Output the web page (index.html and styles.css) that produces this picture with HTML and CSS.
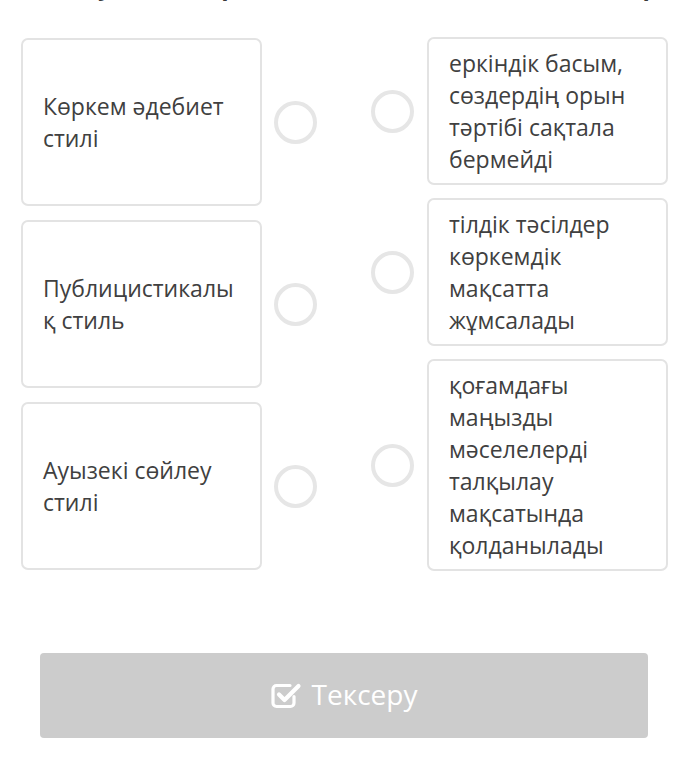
FILE: index.html
```html
<!DOCTYPE html>
<html lang="kk">
<head>
<meta charset="utf-8">
<title>Сәйкестендіру</title>
<link rel="stylesheet" href="styles.css">
</head>
<body>
<h2 class="heading">Сөйлеу стильдерін сипаттамасымен сәйкестендір</h2>
<div class="board">
  <div class="col col-left">
    <div class="item">
      <div class="card card-left">Көркем әдебиет стилі</div>
      <span class="dot"></span>
    </div>
    <div class="item">
      <div class="card card-left">Публицистикалы<wbr>қ стиль</div>
      <span class="dot"></span>
    </div>
    <div class="item">
      <div class="card card-left">Ауызекі сөйлеу стилі</div>
      <span class="dot"></span>
    </div>
  </div>
  <div class="col col-right">
    <div class="item">
      <span class="dot"></span>
      <div class="card card-right">еркіндік басым, сөздердің орын тәртібі сақтала бермейді</div>
    </div>
    <div class="item">
      <span class="dot"></span>
      <div class="card card-right">тілдік тәсілдер көркемдік мақсатта жұмсалады</div>
    </div>
    <div class="item">
      <span class="dot"></span>
      <div class="card card-right">қоғамдағы маңызды мәселелерді талқылау мақсатында қолданылады</div>
    </div>
  </div>
</div>
<button class="check-btn" type="button">
  <svg class="check-icon" width="31" height="28" viewBox="0 0 31 28" aria-hidden="true">
    <path d="M23 15.5 V22 a3.5 3.5 0 0 1 -3.5 3.5 H5.5 a3.5 3.5 0 0 1 -3.5 -3.5 V8 a3.5 3.5 0 0 1 3.5 -3.5 H19" fill="none" stroke="#fff" stroke-width="3.2" stroke-linecap="round"/>
    <path d="M8 13.5 L13.5 19 L27.5 5" fill="none" stroke="#fff" stroke-width="4.2" stroke-linecap="round" stroke-linejoin="round"/>
  </svg>
  <span>Тексеру</span>
</button>
</body>
</html>
```

FILE: styles.css
```css
* { box-sizing: border-box; }

html, body {
  margin: 0;
  padding: 0;
  background: #ffffff;
}

body {
  font-family: "Open Sans", "Noto Sans", sans-serif;
  color: #3d3d3d;
  width: 690px;
  overflow: hidden;
}

.heading {
  margin: -29px 0 0 21px;
  font-size: 24px;
  line-height: 30px;
  font-weight: 700;
  color: #3a3a3a;
  white-space: nowrap;
}

.board {
  display: flex;
  justify-content: space-between;
  margin-top: 36px;
  padding: 0 22px 0 21px;
}

.col {
  display: flex;
  flex-direction: column;
  gap: 13px;
}

.col-left {
  width: 296px;
  padding: 1px 0 1px;
  gap: 14px;
}

.col-right {
  width: 297px;
}

.item {
  display: flex;
  align-items: center;
}

.col-left .item {
  flex: 1;
  align-items: stretch;
  gap: 12px;
}

.col-right .item {
  gap: 13px;
}

.dot {
  flex: 0 0 43px;
  width: 43px;
  height: 43px;
  border: 4px solid #e6e6e6;
  border-radius: 50%;
  align-self: center;
}

.card {
  width: 241px;
  flex: 0 0 241px;
  border: 2px solid #e3e3e3;
  border-radius: 7px;
  background: #ffffff;
  font-size: 23px;
  line-height: 32px;
  color: #404040;
}

.card-left {
  display: flex;
  align-items: center;
  padding: 0 20px;
  overflow-wrap: anywhere;
}

.card-right {
  padding: 8px 20px;
}

.check-btn {
  display: flex;
  align-items: center;
  justify-content: center;
  gap: 10px;
  width: 608px;
  height: 85px;
  margin: 82px 0 0 40px;
  padding: 0 0 4px;
  border: none;
  border-radius: 4px;
  background: #cccccc;
  color: #ffffff;
  font-family: "Open Sans", "Noto Sans", sans-serif;
  font-size: 28px;
  line-height: 1;
}

.check-icon {
  display: block;
  margin-top: 2px;
}
```
